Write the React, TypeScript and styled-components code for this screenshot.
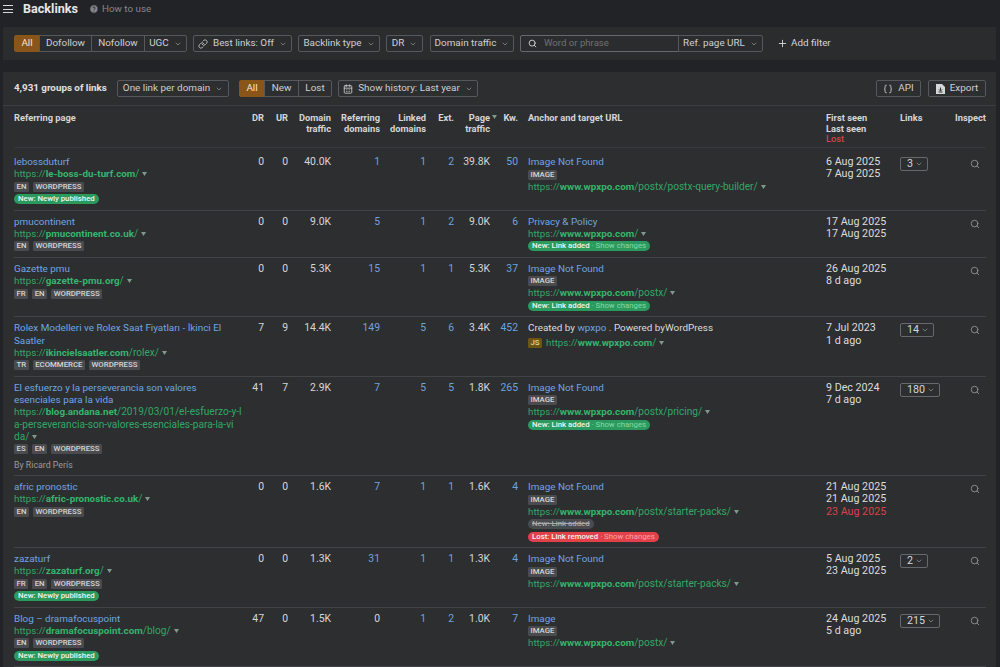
import React from "react";
import styled, { createGlobalStyle } from "styled-components";
import { ChevronDown, Search, Link as ChainIcon, CalendarDays, Plus, Braces, CircleHelp } from "lucide-react";

const GlobalStyle = createGlobalStyle`
  html, body {
    margin: 0;
    background: #222326;
    color: #dcdddf;
    font-family: Roboto, "Liberation Sans", sans-serif;
    font-size: 9.9px;
    line-height: 12.3px;
  }
  * { box-sizing: border-box; }
`;

const Page = styled.div`
  width: 1000px;
  height: 667px;
  overflow: hidden;
  padding: 0 4px 0 3px;
`;

const TopBar = styled.header`
  height: 27px;
  display: flex;
  align-items: center;
  padding-bottom: 9px;
  color: #d8d9db;
`;

const Burger = styled.span`
  width: 10px;
  height: 8px;
  border-top: 1px solid #d8d9db;
  border-bottom: 1px solid #d8d9db;
  display: flex;
  align-items: center;
  &::before {
    content: "";
    width: 100%;
    height: 1px;
    background: #d8d9db;
  }
`;

const Title = styled.h1`
  margin: 0 11px 0 10px;
  font-size: 12.6px;
  font-weight: 700;
  color: #e6e7e9;
`;

const HowTo = styled.span`
  display: flex;
  align-items: center;
  gap: 3px;
  color: #85878a;
  font-size: 9.8px;
`;

const FilterPanel = styled.section`
  height: 33px;
  margin-bottom: 12px;
  background: #2b2c2e;
  display: flex;
  align-items: center;
  padding-left: 11px;
`;

const Group = styled.div<{ $gap?: number }>`
  display: flex;
  margin-right: ${(p) => p.$gap ?? 6}px;
`;

const Btn = styled.button<{ $w: number; $active?: boolean }>`
  width: ${(p) => p.$w}px;
  height: 17px;
  padding: 0;
  display: flex;
  align-items: center;
  justify-content: center;
  gap: 5px;
  font: inherit;
  font-size: 9.9px;
  color: ${(p) => (p.$active ? "#f4e6d4" : "#cfd0d2")};
  background: ${(p) => (p.$active ? "#8a5519" : "transparent")};
  border: 1px solid ${(p) => (p.$active ? "#8a5519" : "#56585b")};
  margin-left: -1px;
  white-space: nowrap;
  &:first-child { border-radius: 2px 0 0 2px; margin-left: 0; }
  &:last-child { border-radius: 0 2px 2px 0; }
  &:only-child { border-radius: 2px; }
`;

const SearchBox = styled.div`
  width: 159px;
  height: 17px;
  display: flex;
  align-items: center;
  gap: 7px;
  padding-left: 7px;
  border: 1px solid #66686b;
  border-radius: 2px 0 0 2px;
  color: #6f7174;
  font-size: 9.6px;
  svg { color: #d5d6d8; }
`;

const AddFilter = styled.span`
  display: flex;
  align-items: center;
  gap: 3px;
  margin-left: 14px;
  color: #d5d6d8;
  font-size: 9.9px;
`;

const TablePanel = styled.section`
  background: #2d2e30;
  height: 600px;
`;

const Toolbar = styled.div`
  height: 34px;
  display: flex;
  align-items: center;
  padding: 0 10px 0 11px;
  border-bottom: 1px solid #3c3d40;
`;

const Count = styled.strong`
  width: 103px;
  font-size: 9.8px;
  font-weight: 700;
  color: #e0e1e3;
`;

const Spacer = styled.div`
  flex: 1;
`;

const columns = "226px 24px 24px 43px 49px 46px 28px 36px 28px 308px 74px 50px 36px";

const HeadRow = styled.div`
  display: grid;
  grid-template-columns: ${columns};
  margin: 0 10px 0 11px;
  height: 41px;
  padding-top: 6px;
  font-size: 9.3px;
  line-height: 11px;
  font-weight: 700;
  color: #d5d6d8;
`;

const HeadCell = styled.div<{ $left?: boolean }>`
  text-align: ${(p) => (p.$left ? "left" : "right")};
  white-space: nowrap;
`;

const AnchorHead = styled(HeadCell)`
  padding-left: 10px;
`;

const LostHead = styled.div`
  color: #d9424b;
  font-weight: 500;
  line-height: 9px;
`;

const SortMark = styled.span`
  position: relative;
  svg {
    position: absolute;
    left: 2px;
    top: 3px;
  }
`;

const Body = styled.div`
  margin: 0 10px 0 11px;
  border-top: 1px solid #37383b;
  padding-top: 3px;
`;

const Row = styled.div`
  display: grid;
  grid-template-columns: ${columns};
  padding: 5px 0 4px;
  border-bottom: 1px solid #424346;
`;

const Stack = styled.div`
  min-width: 0;
`;

const AnchorStack = styled(Stack)`
  padding-left: 10px;
`;

const Dates = styled(Stack)`
  font-size: 10.7px;
`;

const Num = styled.div<{ $link?: boolean }>`
  text-align: right;
  font-size: 10.4px;
  color: ${(p) => (p.$link ? "#6da3dc" : "#d5d6d8")};
`;

const PageTitle = styled.div`
  color: #6da6e2;
`;

const InlineLink = styled.span`
  color: #6da6e2;
`;

const Url = styled.div`
  color: #31a866;
  font-size: 10.1px;
  white-space: pre;
  span { font-size: 9.8px; }
  b { font-size: 9.8px; font-weight: 700; color: #35b56e; }
  svg { margin-left: 3px; vertical-align: 1px; }
`;

const Tags = styled.div`
  display: flex;
  gap: 4px;
  height: 12.5px;
  align-items: center;
`;

const JsRow = styled(Tags)`
  margin-top: 2px;
`;

const Tag = styled.span<{ $js?: boolean }>`
  height: 10px;
  padding: 0 2.5px;
  border-radius: 1.5px;
  font-size: 7.8px;
  line-height: 10px;
  font-weight: 500;
  color: ${(p) => (p.$js ? "#e8d9a0" : "#d5d6d8")};
  background: ${(p) => (p.$js ? "#6b5712" : "#4a4b4e")};
`;

const By = styled.div`
  margin-top: 3px;
  font-size: 8.8px;
  color: #9a9b9e;
`;

const PillRow = styled.div`
  height: 12.5px;
  display: flex;
  align-items: center;
`;

const Pill = styled.span<{ $kind: "new" | "lost" | "old" }>`
  height: 10px;
  padding: 0 4px;
  border-radius: 5px;
  font-size: 7.8px;
  line-height: 10px;
  font-weight: 500;
  white-space: nowrap;
  color: ${(p) => (p.$kind === "old" ? "#a9aaac" : "#f2f5f3")};
  background: ${(p) => (p.$kind === "lost" ? "#e2414a" : p.$kind === "old" ? "#4a4b4e" : "#2b9a5e")};
  text-decoration: ${(p) => (p.$kind === "old" ? "line-through" : "none")};
  em {
    font-style: normal;
    font-weight: 400;
    color: ${(p) => (p.$kind === "lost" ? "#f7a4a8" : "#85d8a8")};
  }
`;

const Lost = styled.div`
  color: #d9424b;
`;

const LinksBtn = styled.button`
  height: 14px;
  margin-top: 1px;
  padding: 0 4px 0 6px;
  display: inline-flex;
  align-items: center;
  gap: 2px;
  font: inherit;
  font-size: 10.7px;
  color: #d5d6d8;
  background: transparent;
  border: 1px solid #66686b;
  border-radius: 2px;
`;

const Inspect = styled.div`
  padding: 3px 0 0 20px;
  color: #8d8f92;
`;

const Caret = () => (
  <svg width="5" height="4" viewBox="0 0 5 4">
    <path d="M0 0h5L2.5 4z" fill="#7f9a8a" />
  </svg>
);

const Chev = () => <ChevronDown size={8} strokeWidth={2} color="#9a9b9e" />;

const ExportIcon = () => (
  <svg width="9" height="10" viewBox="0 0 9 10">
    <path d="M0 0h6l3 3v7H0z" fill="#d5d6d8" />
    <path d="M4.5 3.5v3M3 5.5l1.5 1.5L6 5.5M2.5 8h4" stroke="#2d2e30" strokeWidth="1" fill="none" />
  </svg>
);

type Anchor = {
  text?: string;
  image?: boolean;
  created?: boolean;
  domain: string;
  path: string;
  pill?: boolean;
  lost?: boolean;
};

type Entry = {
  title: string;
  domain: string;
  path?: string;
  tags: string[];
  published?: boolean;
  by?: string;
  nums: string[];
  anchor: Anchor;
  first: string;
  last: string;
  lostDate?: string;
  links?: string;
};

const rows: Entry[] = [
  { title: "lebossduturf", domain: "le-boss-du-turf.com", tags: ["EN", "WORDPRESS"], published: true, nums: ["0", "0", "40.0K", "1", "1", "2", "39.8K", "50"], anchor: { text: "Image Not Found", image: true, domain: "www.wpxpo.com", path: "/postx/postx-query-builder/" }, first: "6 Aug 2025", last: "7 Aug 2025", links: "3" },
  { title: "pmucontinent", domain: "pmucontinent.co.uk", tags: ["EN", "WORDPRESS"], nums: ["0", "0", "9.0K", "5", "1", "2", "9.0K", "6"], anchor: { text: "Privacy & Policy", domain: "www.wpxpo.com", path: "/", pill: true }, first: "17 Aug 2025", last: "17 Aug 2025" },
  { title: "Gazette pmu", domain: "gazette-pmu.org", tags: ["FR", "EN", "WORDPRESS"], nums: ["0", "0", "5.3K", "15", "1", "1", "5.3K", "37"], anchor: { text: "Image Not Found", image: true, domain: "www.wpxpo.com", path: "/postx/", pill: true }, first: "26 Aug 2025", last: "8 d ago" },
  { title: "Rolex Modelleri ve Rolex Saat Fiyatları - İkinci El Saatler", domain: "ikincielsaatler.com", path: "/rolex/", tags: ["TR", "ECOMMERCE", "WORDPRESS"], nums: ["7", "9", "14.4K", "149", "5", "6", "3.4K", "452"], anchor: { created: true, domain: "www.wpxpo.com", path: "/" }, first: "7 Jul 2023", last: "1 d ago", links: "14" },
  { title: "El esfuerzo y la perseverancia son valores esenciales para la vida", domain: "blog.andana.net", path: "/2019/03/01/el-esfuerzo-y-l\na-perseverancia-son-valores-esenciales-para-la-vi\nda/", tags: ["ES", "EN", "WORDPRESS"], by: "By Ricard Perís", nums: ["41", "7", "2.9K", "7", "5", "5", "1.8K", "265"], anchor: { text: "Image Not Found", image: true, domain: "www.wpxpo.com", path: "/postx/pricing/", pill: true }, first: "9 Dec 2024", last: "7 d ago", links: "180" },
  { title: "afric pronostic", domain: "afric-pronostic.co.uk", tags: ["EN", "WORDPRESS"], nums: ["0", "0", "1.6K", "7", "1", "1", "1.6K", "4"], anchor: { text: "Image Not Found", image: true, domain: "www.wpxpo.com", path: "/postx/starter-packs/", lost: true }, first: "21 Aug 2025", last: "21 Aug 2025", lostDate: "23 Aug 2025" },
  { title: "zazaturf", domain: "zazaturf.org", tags: ["FR", "EN", "WORDPRESS"], published: true, nums: ["0", "0", "1.3K", "31", "1", "1", "1.3K", "4"], anchor: { text: "Image Not Found", image: true, domain: "www.wpxpo.com", path: "/postx/starter-packs/" }, first: "5 Aug 2025", last: "23 Aug 2025", links: "2" },
  { title: "Blog – dramafocuspoint", domain: "dramafocuspoint.com", path: "/blog/", tags: ["EN", "WORDPRESS"], published: true, nums: ["47", "0", "1.5K", "0", "1", "2", "1.0K", "7"], anchor: { text: "Image", image: true, domain: "www.wpxpo.com", path: "/postx/" }, first: "24 Aug 2025", last: "5 d ago", links: "215" },
];

function UrlLine({ domain, path = "/" }: { domain: string; path?: string }) {
  return (
    <>
      <span>https://</span><b>{domain}</b>{path}
      <Caret />
    </>
  );
}

function AnchorCell({ a }: { a: Anchor }) {
  return (
    <AnchorStack>
      {a.created ? (
        <>
          <div>Created by <InlineLink>wpxpo</InlineLink> . Powered byWordPress</div>
          <JsRow>
            <Tag $js>JS</Tag>
            <Url><UrlLine domain={a.domain} path={a.path} /></Url>
          </JsRow>
        </>
      ) : (
        <>
          <PageTitle>{a.text}</PageTitle>
          {a.image && <Tags><Tag>IMAGE</Tag></Tags>}
          <Url><UrlLine domain={a.domain} path={a.path} /></Url>
        </>
      )}
      {a.pill && (
        <PillRow><Pill $kind="new">New: Link added <em>· Show changes</em></Pill></PillRow>
      )}
      {a.lost && (
        <>
          <PillRow><Pill $kind="old">New: Link added</Pill></PillRow>
          <PillRow><Pill $kind="lost">Lost: Link removed <em>· Show changes</em></Pill></PillRow>
        </>
      )}
    </AnchorStack>
  );
}

export default function App(): JSX.Element {
  return (
    <>
      <GlobalStyle />
      <Page>
        <TopBar>
          <Burger />
          <Title>Backlinks</Title>
          <HowTo><CircleHelp size={10} fill="#85878a" color="#222326" />How to use</HowTo>
        </TopBar>

        <FilterPanel>
          <Group>
            <Btn $w={26} $active>All</Btn>
            <Btn $w={53}>Dofollow</Btn>
            <Btn $w={54}>Nofollow</Btn>
            <Btn $w={43}>UGC <Chev /></Btn>
          </Group>
          <Group><Btn $w={99}><ChainIcon size={10} /> Best links: Off <Chev /></Btn></Group>
          <Group><Btn $w={82}>Backlink type <Chev /></Btn></Group>
          <Group $gap={7}><Btn $w={37}>DR <Chev /></Btn></Group>
          <Group><Btn $w={84}>Domain traffic <Chev /></Btn></Group>
          <Group $gap={0}>
            <SearchBox><Search size={9} strokeWidth={2.4} />Word or phrase</SearchBox>
            <Btn $w={85}>Ref. page URL <Chev /></Btn>
          </Group>
          <AddFilter><Plus size={11} />Add filter</AddFilter>
        </FilterPanel>

        <TablePanel>
          <Toolbar>
            <Count>4,931 groups of links</Count>
            <Group $gap={10}><Btn $w={112}>One link per domain <Chev /></Btn></Group>
            <Group><Btn $w={26} $active>All</Btn><Btn $w={35}>New</Btn><Btn $w={34}>Lost</Btn></Group>
            <Group $gap={0}><Btn $w={140}><CalendarDays size={10} /> Show history: Last year <Chev /></Btn></Group>
            <Spacer />
            <Group $gap={7}><Btn $w={45}><Braces size={10} /> API</Btn></Group>
            <Group $gap={0}><Btn $w={58}><ExportIcon /> Export</Btn></Group>
          </Toolbar>

          <HeadRow>
            <HeadCell $left>Referring page</HeadCell>
            <HeadCell>DR</HeadCell>
            <HeadCell>UR</HeadCell>
            <HeadCell>Domain<br />traffic</HeadCell>
            <HeadCell>Referring<br />domains</HeadCell>
            <HeadCell>Linked<br />domains</HeadCell>
            <HeadCell>Ext.</HeadCell>
            <HeadCell>Page<SortMark><Caret /></SortMark><br />traffic</HeadCell>
            <HeadCell>Kw.</HeadCell>
            <AnchorHead $left>Anchor and target URL</AnchorHead>
            <HeadCell $left>First seen<br />Last seen<LostHead>Lost</LostHead></HeadCell>
            <HeadCell $left>Links</HeadCell>
            <HeadCell>Inspect</HeadCell>
          </HeadRow>

          <Body>
            {rows.map((r) => (
              <Row key={r.title}>
                <Stack>
                  <PageTitle>{r.title}</PageTitle>
                  <Url><UrlLine domain={r.domain} path={r.path} /></Url>
                  <Tags>{r.tags.map((t) => <Tag key={t}>{t}</Tag>)}</Tags>
                  {r.published && <PillRow><Pill $kind="new">New: Newly published</Pill></PillRow>}
                  {r.by && <By>{r.by}</By>}
                </Stack>
                {r.nums.map((n, i) => (
                  <Num key={i} $link={i >= 3 && i !== 6 && !(r.title.startsWith("Blog") && i === 3)}>{n}</Num>
                ))}
                <AnchorCell a={r.anchor} />
                <Dates>
                  <div>{r.first}</div>
                  <div>{r.last}</div>
                  {r.lostDate && <Lost>{r.lostDate}</Lost>}
                </Dates>
                <Stack>{r.links && <LinksBtn>{r.links} <Chev /></LinksBtn>}</Stack>
                <Inspect><Search size={10} strokeWidth={2.2} /></Inspect>
              </Row>
            ))}
          </Body>
        </TablePanel>
      </Page>
    </>
  );
}
